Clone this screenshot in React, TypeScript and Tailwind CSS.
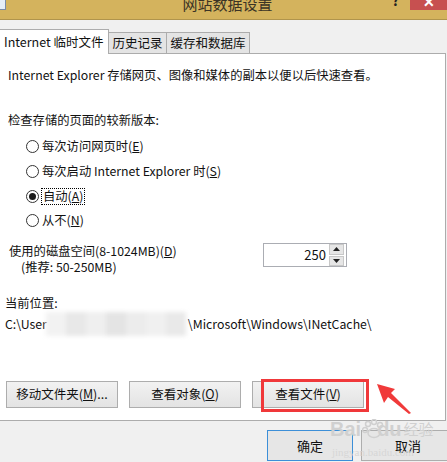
import React from "react";

const font = { fontFamily: '"Noto Sans CJK SC", "Noto Sans", sans-serif' };

function Radio({ checked, label, focus }: { checked?: boolean; label: React.ReactNode; focus?: boolean }) {
  return (
    <div className="flex items-center h-[24px] pl-[26px]">
      <span className="w-[13px] h-[13px] rounded-full border border-[#333] bg-white flex items-center justify-center mr-[3px]">
        {checked && <span className="w-[7px] h-[7px] rounded-full bg-[#1a1a1a]" />}
      </span>
      <span className={focus ? "outline outline-1 outline-dotted outline-[#000] px-[1px] leading-[15px]" : "leading-[15px]"}>{label}</span>
    </div>
  );
}

function Btn({ children, w, className = "" }: { children: React.ReactNode; w: string; className?: string }) {
  return (
    <div className={`h-[27px] ${w} border border-[#adadad] bg-gradient-to-b from-[#f2f2f2] to-[#e3e3e3] flex items-center justify-center text-[12.5px] ${className}`}>
      {children}
    </div>
  );
}

export default function App() {
  return (
    <div className="w-[447px] h-[462px] bg-[#f0f0f0] overflow-hidden relative text-[12.3px] text-[#111]" style={font}>
      {/* title bar */}
      <div className="h-[20px] bg-[#d4b35d] border-b border-[#b0944c] flex relative overflow-hidden">
        <div className="w-[6px] h-[10px] bg-[#e6eef8] border-r border-b border-[#7a8ca8]" />
        <div className="flex-1 flex justify-center">
          <span className="text-[15px] text-[#3b3325] leading-[20px] -mt-[6px] ml-[2px]">网站数据设置</span>
        </div>
        <span className="absolute left-[392px] -top-[7px] text-[14px] font-bold text-[#222] leading-[14px]">?</span>
        <div className="absolute left-[410px] top-0 w-[37px] h-[10px] bg-[#c75050] flex justify-center overflow-hidden">
          <span className="text-white text-[14px] leading-[14px] -mt-[6px] font-bold">✕</span>
        </div>
      </div>

      {/* tabs */}
      <div className="flex items-end mt-[9px] h-[25px] relative z-10">
        <div className="h-[25px] w-[109px] bg-white border border-b-0 border-[#acacac] border-l-0 flex items-center pl-[4px] text-[12.5px]">Internet 临时文件</div>
        <div className="h-[22px] w-[58px] bg-[#e4e4e4] border border-l-0 border-[#acacac] flex items-center justify-center text-[12.5px]">历史记录</div>
        <div className="h-[22px] w-[83px] bg-[#e4e4e4] border border-l-0 border-[#acacac] flex items-center justify-center text-[12.5px]">缓存和数据库</div>
      </div>

      {/* panel */}
      <div className="w-[446px] -mt-px h-[368px] bg-white border border-l-0 border-[#acacac] relative">
        <div className="pl-[8px] pt-[13px] leading-[16px]">Internet Explorer 存储网页、图像和媒体的副本以便以后快速查看。</div>
        <div className="pl-[8px] mt-[29px] leading-[16px]">检查存储的页面的较新版本:</div>
        <div className="mt-[6px] flex flex-col">
          <Radio label={<>每次访问网页时(<u>E</u>)</>} />
          <div className="h-[1px]" />
          <Radio label={<>每次启动 Internet Explorer 时(<u>S</u>)</>} />
          <div className="h-[1px]" />
          <Radio checked focus label={<>自动(<u>A</u>)</>} />
          <Radio label={<>从不(<u>N</u>)</>} />
        </div>
        <div className="flex mt-[10px]">
          <div className="w-[263px] pl-[9px] pt-[1px] leading-[16px]">
            <div>使用的磁盘空间(8-1024MB)(<u>D</u>)</div>
            <div className="pl-[12px]">(推荐: 50-250MB)</div>
          </div>
          <div className="mt-[1px] w-[84px] h-[24px] border border-[#abadb3] flex items-center">
            <span className="flex-1 text-right pr-[3px] text-[13px]">250</span>
            <div className="w-[15px] h-[22px] flex flex-col gap-px mr-[2px]">
              <div className="flex-1 bg-[#e6e6e6] border border-[#c8c8c8] flex items-center justify-center">
                <svg width="7" height="4" viewBox="0 0 7 4"><path d="M3.5 0L7 4H0Z" fill="#222" /></svg>
              </div>
              <div className="flex-1 bg-[#e6e6e6] border border-[#c8c8c8] flex items-center justify-center">
                <svg width="7" height="4" viewBox="0 0 7 4"><path d="M0 0H7L3.5 4Z" fill="#222" /></svg>
              </div>
            </div>
          </div>
        </div>
        <div className="pl-[5px] mt-[20px] leading-[16px]">当前位置:</div>
        <div className="pl-[5px] mt-[5px] leading-[16px] flex relative">
          <span>C:\User</span>
          <span className="w-[141px]" />
          <span>\Microsoft\Windows\INetCache\</span>
          <div className="absolute left-[46px] -top-[4px] w-[140px] h-[24px] flex blur-[2px]">
            <div className="flex-1 bg-[#f2f2f2]" />
            <div className="flex-1 bg-[#e8e8e8]" />
            <div className="flex-1 bg-[#efefef]" />
            <div className="flex-1 bg-[#e4e4e4]" />
            <div className="flex-1 bg-[#ececec]" />
            <div className="flex-1 bg-[#f0f0f0]" />
            <div className="flex-1 bg-[#e9e9e9]" />
          </div>
        </div>
        <div className="flex pl-[6px] gap-[11px] mt-[49px]">
          <Btn w="w-[112px]">移动文件夹(<u>M</u>)...</Btn>
          <Btn w="w-[112px]">查看对象(<u>O</u>)</Btn>
          <Btn w="w-[112px]">查看文件(<u>V</u>)</Btn>
        </div>
        {/* red highlight */}
        <div className="absolute left-[261px] top-[325px] w-[108px] h-[33px] border-[3px] border-[#f0383a]" />
        {/* arrow */}
        <svg className="absolute left-[374px] top-[326px]" width="40" height="36" viewBox="0 0 40 36">
          <path d="M3 4 L21 9 L17 13 L37 33 L35 34 L14 17 L10 23 Z" fill="#f03a3a" />
        </svg>
      </div>

      {/* bottom buttons */}
      <div className="flex justify-end gap-[8px] mt-[9px] -mr-[8px]">
        <div className="w-[86px] h-[31px] border border-[#3c8fd8] bg-[#e6e6e6] flex items-center justify-center text-[13px]">确定</div>
        <div className="w-[94px] h-[31px] border border-[#adadad] bg-[#e6e6e6] flex items-center justify-center text-[13px]">取消</div>
      </div>

      {/* watermark */}
      <div className="absolute left-[330px] top-[419px] text-[#d0d0d0] text-[20px] font-bold leading-[20px] flex items-center" style={{ fontFamily: '"Liberation Sans", sans-serif' }}>
        <span>Bai</span>
        <svg width="22" height="20" viewBox="0 0 22 20" className="mx-[1px]">
          <circle cx="6" cy="5" r="2.5" fill="none" stroke="#d0d0d0" strokeWidth="1.5" />
          <circle cx="12" cy="3" r="2.5" fill="none" stroke="#d0d0d0" strokeWidth="1.5" />
          <circle cx="18" cy="6" r="2.5" fill="none" stroke="#d0d0d0" strokeWidth="1.5" />
          <circle cx="3" cy="11" r="2.5" fill="none" stroke="#d0d0d0" strokeWidth="1.5" />
          <ellipse cx="12" cy="14" rx="6" ry="4.5" fill="none" stroke="#d0d0d0" strokeWidth="1.5" />
        </svg>
        <span className="-ml-[8px]">du</span>
        <span className="text-[15px] ml-[2px] font-normal" style={font}>经验</span>
      </div>
      <div className="absolute left-[332px] top-[444px] text-[#d6d6d6] text-[11px]" style={{ fontFamily: '"Liberation Serif", serif' }}>jingyan.baidu.com</div>
    </div>
  );
}
